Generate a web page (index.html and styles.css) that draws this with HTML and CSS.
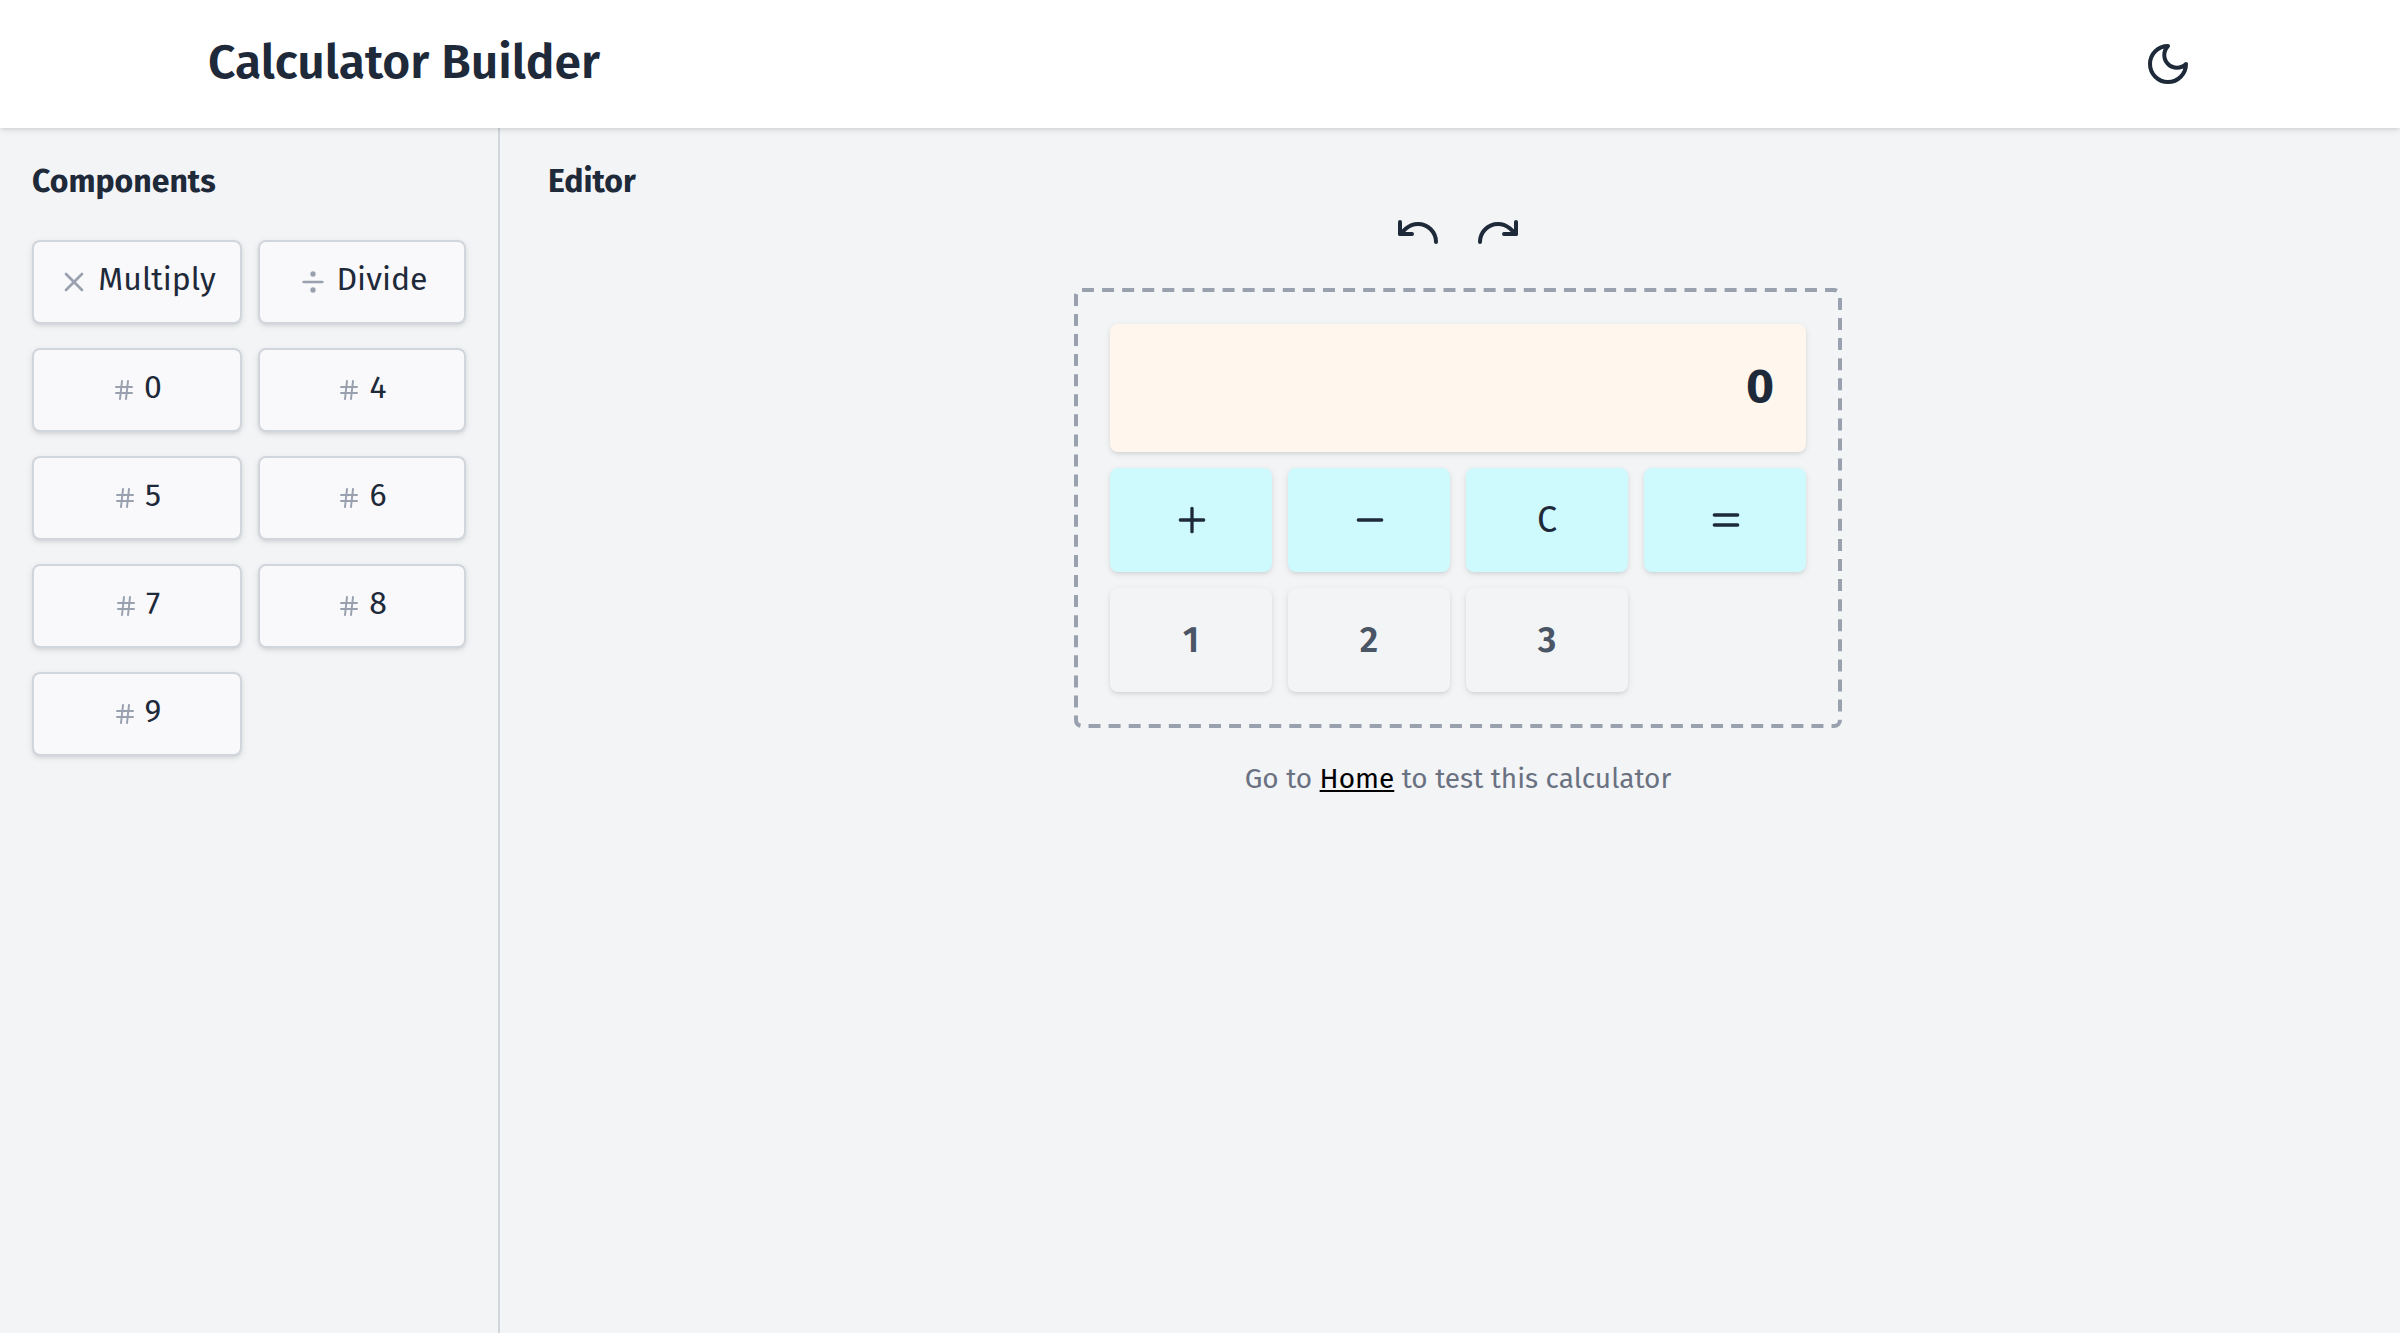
FILE: index.html
```html
<!DOCTYPE html>
<html lang="en">
<head>
<meta charset="utf-8">
<title>Calculator Builder</title>
<link rel="stylesheet" href="styles.css">
</head>
<body>
<svg class="sprite" aria-hidden="true">
  <symbol id="hash" viewBox="0 0 24 24"><path d="M4 9h16M4 15h16M10 3 8 21M16 3l-2 18"/></symbol>
</svg>
<header class="header">
  <h1 class="title">Calculator Builder</h1>
  <svg class="icon icon-lg" viewBox="0 0 24 24"><path d="M12 3a6 6 0 0 0 9 9 9 9 0 1 1-9-9Z"/></svg>
</header>
<div class="layout">
  <aside class="sidebar">
    <h2 class="heading">Components</h2>
    <div class="parts">
      <button class="part"><svg class="icon icon-md" viewBox="0 0 24 24"><path d="M18 6 6 18M6 6l12 12"/></svg><span class="label">Multiply</span></button>
      <button class="part"><svg class="icon icon-md" viewBox="0 0 24 24"><circle cx="12" cy="6" r="1"/><path d="M5 12h14"/><circle cx="12" cy="18" r="1"/></svg><span class="label">Divide</span></button>
      <button class="part"><svg class="icon icon-sm"><use href="#hash"/></svg><span class="label">0</span></button>
      <button class="part"><svg class="icon icon-sm"><use href="#hash"/></svg><span class="label">4</span></button>
      <button class="part"><svg class="icon icon-sm"><use href="#hash"/></svg><span class="label">5</span></button>
      <button class="part"><svg class="icon icon-sm"><use href="#hash"/></svg><span class="label">6</span></button>
      <button class="part"><svg class="icon icon-sm"><use href="#hash"/></svg><span class="label">7</span></button>
      <button class="part"><svg class="icon icon-sm"><use href="#hash"/></svg><span class="label">8</span></button>
      <button class="part"><svg class="icon icon-sm"><use href="#hash"/></svg><span class="label">9</span></button>
    </div>
  </aside>
  <main class="editor">
    <h2 class="heading editor-heading">Editor</h2>
    <div class="toolbar">
      <svg class="icon icon-lg" viewBox="0 0 24 24"><path d="M3 7v6h6"/><path d="M21 17a9 9 0 0 0-9-9 9 9 0 0 0-6 2.3L3 13"/></svg>
      <svg class="icon icon-lg" viewBox="0 0 24 24"><path d="M21 7v6h-6"/><path d="M3 17a9 9 0 0 1 9-9 9 9 0 0 1 6 2.3l3 2.7"/></svg>
    </div>
    <div class="calculator">
      <svg class="outline" viewBox="0 0 768 440"><rect x="2" y="2" width="764" height="436" rx="6"/></svg>
      <div class="display">0</div>
      <button class="key action"><svg class="icon icon-key" viewBox="0 0 24 24"><path d="M5 12h14M12 5v14"/></svg></button>
      <button class="key action"><svg class="icon icon-key" viewBox="0 0 24 24"><path d="M5 12h14"/></svg></button>
      <button class="key action"><span class="key-label clear">C</span></button>
      <button class="key action"><svg class="icon icon-key" viewBox="0 0 24 24"><path d="M5 9h14M5 15h14"/></svg></button>
      <button class="key"><span class="key-label">1</span></button>
      <button class="key"><span class="key-label">2</span></button>
      <button class="key"><span class="key-label">3</span></button>
    </div>
    <p class="hint">Go to <a class="link" href="#">Home</a> to test this calculator</p>
  </main>
</div>
</body>
</html>
```
FILE: styles.css
```css
* { box-sizing: border-box; }
body {
  margin: 0;
  height: 1333px;
  display: flex;
  flex-direction: column;
  overflow: hidden;
  background: #f3f4f6;
  color: #1e2939;
  font-family: "Fira Sans", "Noto Sans", sans-serif;
}
h1, h2, p { margin: 0; }
button { font: inherit; color: inherit; border: 0; padding: 0; }
.sprite { display: none; }
.icon {
  flex: none;
  display: block;
  fill: none;
  stroke: currentColor;
  stroke-width: 2;
  stroke-linecap: round;
  stroke-linejoin: round;
}
.icon-lg { width: 48px; height: 48px; }
.icon-md { width: 32px; height: 32px; }
.icon-sm { width: 24px; height: 24px; }
.icon-key { width: 40px; height: 40px; margin-left: 2px; }

.header {
  position: relative;
  flex: none;
  height: 128px;
  padding: 0 208px;
  display: flex;
  align-items: center;
  justify-content: space-between;
  background: #fff;
  box-shadow: 0 2px 6px rgba(0, 0, 0, .1), 0 2px 4px -2px rgba(0, 0, 0, .1);
}
.title {
  padding-bottom: 4px;
  font-size: 48px;
  font-weight: 600;
  line-height: 64px;
}
.layout { flex: 1; display: flex; }
.sidebar {
  width: 500px;
  padding: 32px;
  border-right: 2px solid #d1d5dc;
}
.heading {
  font-size: 32px;
  font-weight: 700;
  line-height: 42px;
}
.parts {
  margin-top: 38px;
  display: grid;
  grid-template-columns: 210px 208px;
  gap: 24px 16px;
}
.part {
  height: 84px;
  display: flex;
  align-items: center;
  justify-content: center;
  gap: 8px;
  background: #f9f9fb;
  border: 2px solid #d1d5dc;
  border-radius: 8px;
  box-shadow: 0 2px 6px rgba(0, 0, 0, .1), 0 2px 4px -2px rgba(0, 0, 0, .1);
}
.part .icon { color: #99a1af; }
.label {
  padding-bottom: 6px;
  font-size: 32px;
  line-height: 40px;
}

.editor {
  flex: 1;
  padding: 32px 32px 0 48px;
  display: flex;
  flex-direction: column;
  align-items: center;
}
.editor-heading { align-self: flex-start; }
.toolbar { margin-top: 6px; display: flex; gap: 32px; }
.calculator {
  position: relative;
  width: 768px;
  margin-top: 32px;
  padding: 36px;
  display: grid;
  grid-template-columns: repeat(4, 1fr);
  gap: 16px;
}
/* Dashed frame drawn over the drop area: 12px dashes, evenly closed */
.outline {
  position: absolute;
  inset: 0;
  width: 100%;
  height: 100%;
  fill: none;
  stroke: #99a1af;
  stroke-width: 4;
  stroke-dasharray: 12 8.082;
  pointer-events: none;
}
.display, .key {
  display: flex;
  align-items: center;
  border-radius: 8px;
  box-shadow: 0 2px 6px rgba(0, 0, 0, .1), 0 2px 4px -2px rgba(0, 0, 0, .1);
}
.display {
  grid-column: 1 / -1;
  height: 128px;
  padding: 0 32px 5px;
  justify-content: flex-end;
  background: #fff7ed;
  font-size: 48px;
  line-height: 64px;
  font-weight: 700;
}
.key {
  height: 104px;
  justify-content: center;
  background: #f3f4f6;
  color: #4a5565;
  font-size: 36px;
  font-weight: 600;
}
.key.action { background: #cefafe; color: #1e2939; }
.key-label { line-height: 48px; }
.clear { font-weight: 400; }
.hint {
  margin-top: 30px;
  color: #6a7282;
  font-size: 28px;
  line-height: 41px;
}
.link { color: #000; text-underline-offset: 2px; text-decoration-thickness: 2px; }
```
